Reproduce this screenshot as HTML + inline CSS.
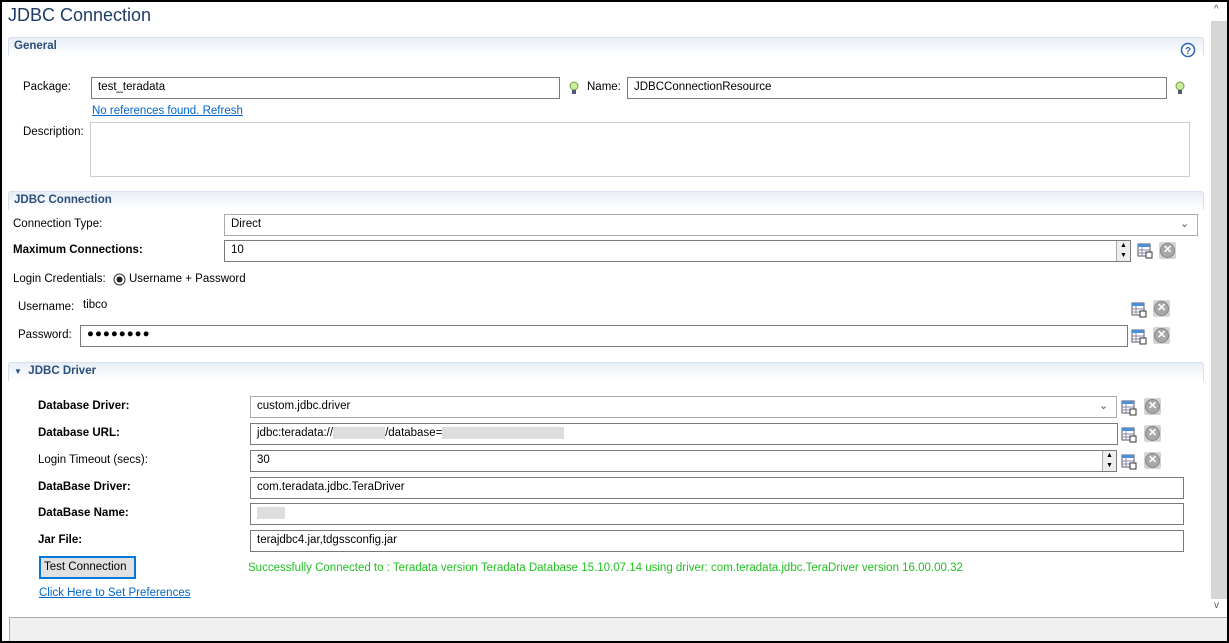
<!DOCTYPE html>
<html><head><meta charset="utf-8"><style>
*{box-sizing:border-box;margin:0;padding:0}
body{width:1229px;height:643px;overflow:hidden;background:#000;font-family:"Liberation Sans",sans-serif;font-size:11.5px;color:#000;position:relative}
#p{position:absolute;left:2px;top:2px;width:1225px;height:639px;background:#fff}
.a{position:absolute;white-space:nowrap}
.hd{position:absolute;left:6px;width:1196px;height:19px;border:1px solid #d5e1ee;border-bottom:none;border-radius:3px 3px 0 0;background:linear-gradient(#e8eef6,#fff);font-weight:bold;color:#2b4f7a;padding:2px 0 0 5px;font-size:11.5px}
.in{position:absolute;border:1px solid #7a7a7a;background:#fff;padding:3px 0 0 6px;height:22px;white-space:nowrap}
.in2{border-color:#ababab}
.b{font-weight:bold}
.lk{color:#0066cc;text-decoration:underline}
.ic{position:absolute;width:16px;height:16px}
.x{position:absolute;width:17px;height:17px;background:#d4d4d4;border-radius:2px}
.x::before{content:"";position:absolute;left:1px;top:1px;width:15px;height:15px;border-radius:50%;background:#a8a8a8;box-shadow:inset 0 0 0 1px #888}
.x::after{content:"✕";position:absolute;left:4px;top:1px;color:#fff;font-weight:bold;font-size:11px}
.spin{position:absolute;width:14px;border-left:1px solid #aaa;background:#eee}
.blur{display:inline-block;height:12px;background:#ddd;vertical-align:middle}
</style></head><body><div id="p">
<div class="a" style="left:6px;top:3px;font-size:18px;color:#1f3b63">JDBC Connection</div>
<div class="a" style="left:1208px;top:0;width:17px;height:615px;background:#fff"></div>
<div class="a" style="left:1209px;top:19px;width:16px;height:578px;background:#d6d6d6"></div>
<div class="a" style="left:1212px;top:2px;font-size:10px;color:#555">^</div>
<div class="a" style="left:1212px;top:598px;font-size:10px;color:#555">v</div>
<div class="hd" style="top:35px">General</div>
<svg class="ic" style="left:1178px;top:40px" viewBox="0 0 16 16"><circle cx="8" cy="8" r="6.5" fill="#fff" stroke="#2a63b0" stroke-width="1.5"/><text x="8" y="12" font-size="10" font-weight="bold" text-anchor="middle" fill="#2a63b0" font-family="Liberation Sans">?</text></svg>
<div class="a" style="left:21px;top:79px">Package:</div>
<div class="in" style="left:89px;top:75px;width:469px">test_teradata</div>
<svg class="ic" style="left:564px;top:78px" viewBox="0 0 16 16"><circle cx="8" cy="6" r="4" fill="#c8f09a" stroke="#7a9a4a"/><rect x="6" y="10" width="4" height="4" fill="#557"/></svg>
<div class="a" style="left:585px;top:79px">Name:</div>
<div class="in" style="left:625px;top:75px;width:540px">JDBCConnectionResource</div>
<svg class="ic" style="left:1170px;top:78px" viewBox="0 0 16 16"><circle cx="8" cy="6" r="4" fill="#c8f09a" stroke="#7a9a4a"/><rect x="6" y="10" width="4" height="4" fill="#557"/></svg>
<div class="a lk" style="left:90px;top:103px">No references found. Refresh</div>
<div class="a" style="left:21px;top:124px">Description:</div>
<div class="in in2" style="left:88px;top:120px;width:1100px;height:55px;border-color:#ccc"></div>
<div class="a" style="left:1171px;top:121px;width:16px;height:53px;background:#fff"></div>
<div class="hd" style="top:189px">JDBC Connection</div>
<div class="a" style="left:11px;top:216px">Connection Type:</div>
<div class="in in2" style="left:222px;top:212px;width:974px">Direct</div>
<div class="a" style="left:1178px;top:215px;color:#555;font-size:11px">⌄</div>
<div class="a b" style="left:11px;top:242px">Maximum Connections:</div>
<div class="in" style="left:222px;top:238px;width:907px">10</div>
<div class="spin" style="left:1114px;top:239px;height:20px"><div style="font-size:7px;text-align:center;line-height:10px">▲<br>▼</div></div>
<svg class="ic" style="left:1135px;top:241px" viewBox="0 0 16 16"><rect x="1" y="1" width="12" height="12" fill="#fff" stroke="#556"/><rect x="1" y="1" width="12" height="3" fill="#4a90d9"/><path d="M1 7h12M1 10h12M5 4v9" stroke="#88a"/><rect x="9" y="9" width="6" height="6" fill="#fff" stroke="#333"/></svg>
<div class="x" style="left:1157px;top:240px"></div>
<div class="a" style="left:11px;top:271px">Login Credentials:</div>
<svg class="ic" style="left:111px;top:271px;width:13px;height:13px" viewBox="0 0 13 13"><circle cx="6.5" cy="6.5" r="5.5" fill="#fff" stroke="#333"/><circle cx="6.5" cy="6.5" r="3" fill="#222"/></svg>
<div class="a" style="left:127px;top:271px">Username + Password</div>
<div class="a" style="left:16px;top:299px">Username:</div>
<div class="a" style="left:81px;top:297px">tibco</div>
<svg class="ic" style="left:1129px;top:300px" viewBox="0 0 16 16"><rect x="1" y="1" width="12" height="12" fill="#fff" stroke="#556"/><rect x="1" y="1" width="12" height="3" fill="#4a90d9"/><path d="M1 7h12M1 10h12M5 4v9" stroke="#88a"/><rect x="9" y="9" width="6" height="6" fill="#fff" stroke="#333"/></svg>
<div class="x" style="left:1151px;top:298px"></div>
<div class="a" style="left:16px;top:327px">Password:</div>
<div class="in" style="left:78px;top:323px;width:1048px;letter-spacing:1px;padding-top:2px">●●●●●●●●</div>
<svg class="ic" style="left:1129px;top:327px" viewBox="0 0 16 16"><rect x="1" y="1" width="12" height="12" fill="#fff" stroke="#556"/><rect x="1" y="1" width="12" height="3" fill="#4a90d9"/><path d="M1 7h12M1 10h12M5 4v9" stroke="#88a"/><rect x="9" y="9" width="6" height="6" fill="#fff" stroke="#333"/></svg>
<div class="x" style="left:1151px;top:325px"></div>
<div class="hd" style="top:360px;padding-left:5px"><span style="font-size:8px;color:#2b4f7a">▼</span>&nbsp; JDBC Driver</div>
<div class="a b" style="left:36px;top:398px">Database Driver:</div>
<div class="in in2" style="left:248px;top:394px;width:867px">custom.jdbc.driver</div>
<div class="a" style="left:1097px;top:397px;color:#555;font-size:11px">⌄</div>
<svg class="ic" style="left:1119px;top:398px" viewBox="0 0 16 16"><rect x="1" y="1" width="12" height="12" fill="#fff" stroke="#556"/><rect x="1" y="1" width="12" height="3" fill="#4a90d9"/><path d="M1 7h12M1 10h12M5 4v9" stroke="#88a"/><rect x="9" y="9" width="6" height="6" fill="#fff" stroke="#333"/></svg>
<div class="x" style="left:1142px;top:396px"></div>
<div class="a b" style="left:36px;top:425px">Database URL:</div>
<div class="in" style="left:248px;top:421px;width:868px">jdbc:teradata://<span class="blur" style="width:52px"></span>/database=<span class="blur" style="width:122px"></span></div>
<svg class="ic" style="left:1119px;top:425px" viewBox="0 0 16 16"><rect x="1" y="1" width="12" height="12" fill="#fff" stroke="#556"/><rect x="1" y="1" width="12" height="3" fill="#4a90d9"/><path d="M1 7h12M1 10h12M5 4v9" stroke="#88a"/><rect x="9" y="9" width="6" height="6" fill="#fff" stroke="#333"/></svg>
<div class="x" style="left:1142px;top:423px"></div>
<div class="a" style="left:36px;top:452px">Login Timeout (secs):</div>
<div class="in" style="left:248px;top:448px;width:867px">30</div>
<div class="spin" style="left:1100px;top:449px;height:20px"><div style="font-size:7px;text-align:center;line-height:10px">▲<br>▼</div></div>
<svg class="ic" style="left:1119px;top:452px" viewBox="0 0 16 16"><rect x="1" y="1" width="12" height="12" fill="#fff" stroke="#556"/><rect x="1" y="1" width="12" height="3" fill="#4a90d9"/><path d="M1 7h12M1 10h12M5 4v9" stroke="#88a"/><rect x="9" y="9" width="6" height="6" fill="#fff" stroke="#333"/></svg>
<div class="x" style="left:1142px;top:450px"></div>
<div class="a b" style="left:36px;top:479px">DataBase Driver:</div>
<div class="in" style="left:248px;top:475px;width:934px">com.teradata.jdbc.TeraDriver</div>
<div class="a b" style="left:36px;top:505px">DataBase Name:</div>
<div class="in" style="left:248px;top:501px;width:934px"><span class="blur" style="width:28px"></span></div>
<div class="a b" style="left:36px;top:532px">Jar File:</div>
<div class="in" style="left:248px;top:528px;width:934px">terajdbc4.jar,tdgssconfig.jar</div>
<div class="a" style="left:37px;top:554px;width:97px;height:23px;border:2px solid #0078d7;background:#e1e1e1;padding:3px 0 0 3px">Test Connection</div>
<div class="a" style="left:246px;top:560px;color:#22c022">Successfully Connected to : Teradata version Teradata Database 15.10.07.14 using driver: com.teradata.jdbc.TeraDriver version 16.00.00.32</div>
<div class="a lk" style="left:37px;top:585px">Click Here to Set Preferences</div>
<div class="a" style="left:7px;top:615px;width:1218px;height:24px;background:#f0f0f0;border-top:1px solid #aaa;border-left:1px solid #aaa"></div>
</div></body></html>
